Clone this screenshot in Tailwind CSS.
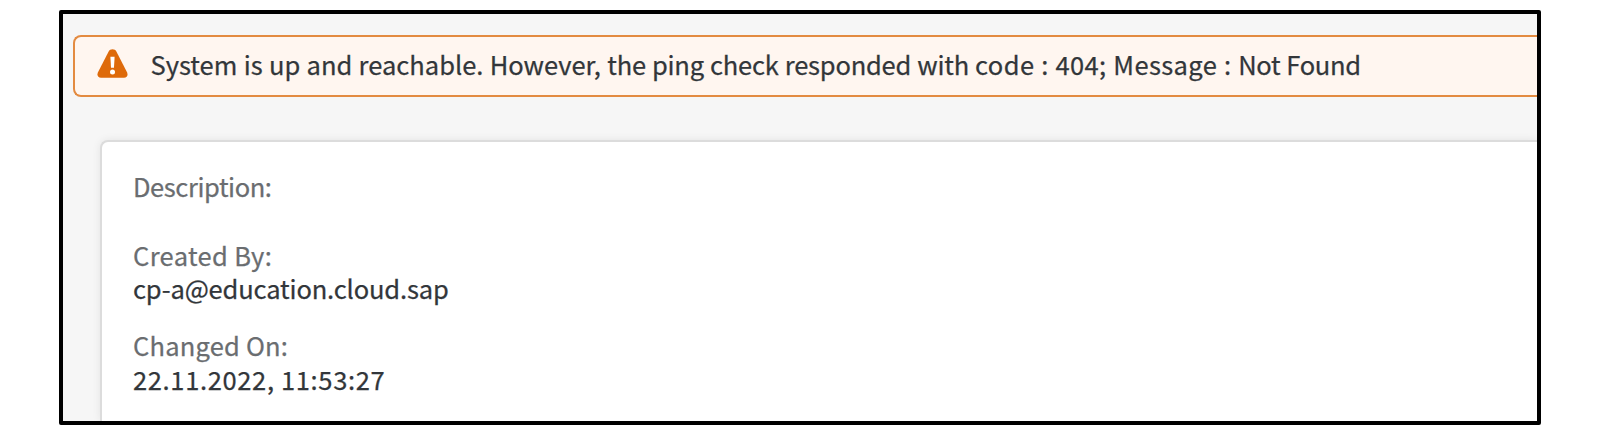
<!DOCTYPE html>
<html lang="en">
<head>
<meta charset="utf-8">
<title>System status</title>
<script src="https://cdn.jsdelivr.net/npm/@tailwindcss/browser@4"></script>
</head>
<body class="h-[435px] overflow-hidden bg-white pt-[10px] pl-[59px] font-['Noto_Sans_CJK_SC',sans-serif] text-[25.5px] whitespace-nowrap text-[#32363a] [-webkit-text-stroke:0.25px_currentColor]">
<main class="flex h-[415px] w-[1482px] flex-col overflow-hidden rounded-[2px] border-4 border-black bg-[#f6f6f6]">
  <div class="mt-[21px] ml-[10px] flex h-[62px] shrink-0 items-start rounded-l-[8px] border-2 border-r-0 border-[#e38b41] bg-[#fff6f0] pl-[21.5px]" role="alert">
    <svg class="mt-[12px] h-[29px] w-[31px] shrink-0" viewBox="0 0 31 29">
      <path d="M15.5 0.3C17.2 0.3 18.6 1.1 19.5 2.7L30 23.3C31.3 26.1 30.2 28.7 27 28.7H4C0.8 28.7 -0.3 26.1 1 23.3L11.5 2.7C12.4 1.1 13.8 0.3 15.5 0.3Z" fill="#de6a0a"/>
      <path d="M13.4 7.8H17.6L17 18.8H14Z" fill="#fff"/>
      <circle cx="15.5" cy="23" r="2.5" fill="#fff"/>
    </svg>
    <p class="mt-[9px] ml-[23px] leading-[36px] [word-spacing:0.62px]">System is up and reachable. However, <span class="tracking-[-0.21px]">the ping check responded with </span><span class="tracking-[0.4px]">code : 404; Message : </span><span class="tracking-[-0.32px]">Not Found</span></p>
  </div>
  <section class="mt-[43px] ml-[37px] flex-1 rounded-tl-[8px] border-t-2 border-l-2 border-[#dcdcdc] bg-white pt-[28px] pl-[31px] shadow-[0_0_8px_rgba(0,0,0,0.08)]">
    <dl class="leading-[32px]">
      <dt class="tracking-[-0.42px] text-[#6a6d70]">Description:</dt>
      <dd class="h-[37px]"></dd>
      <dt class="tracking-[0.36px] text-[#6a6d70]">Created By:</dt>
      <dd class="mt-px tracking-[-0.14px]">cp-a@education.cloud.sap</dd>
      <dt class="mt-[25px] tracking-[0.2px] text-[#6a6d70]">Changed On:</dt>
      <dd class="mt-[2px] tracking-[0.65px]">22.11.2022, 11:53:27</dd>
    </dl>
  </section>
</main>
</body>
</html>
